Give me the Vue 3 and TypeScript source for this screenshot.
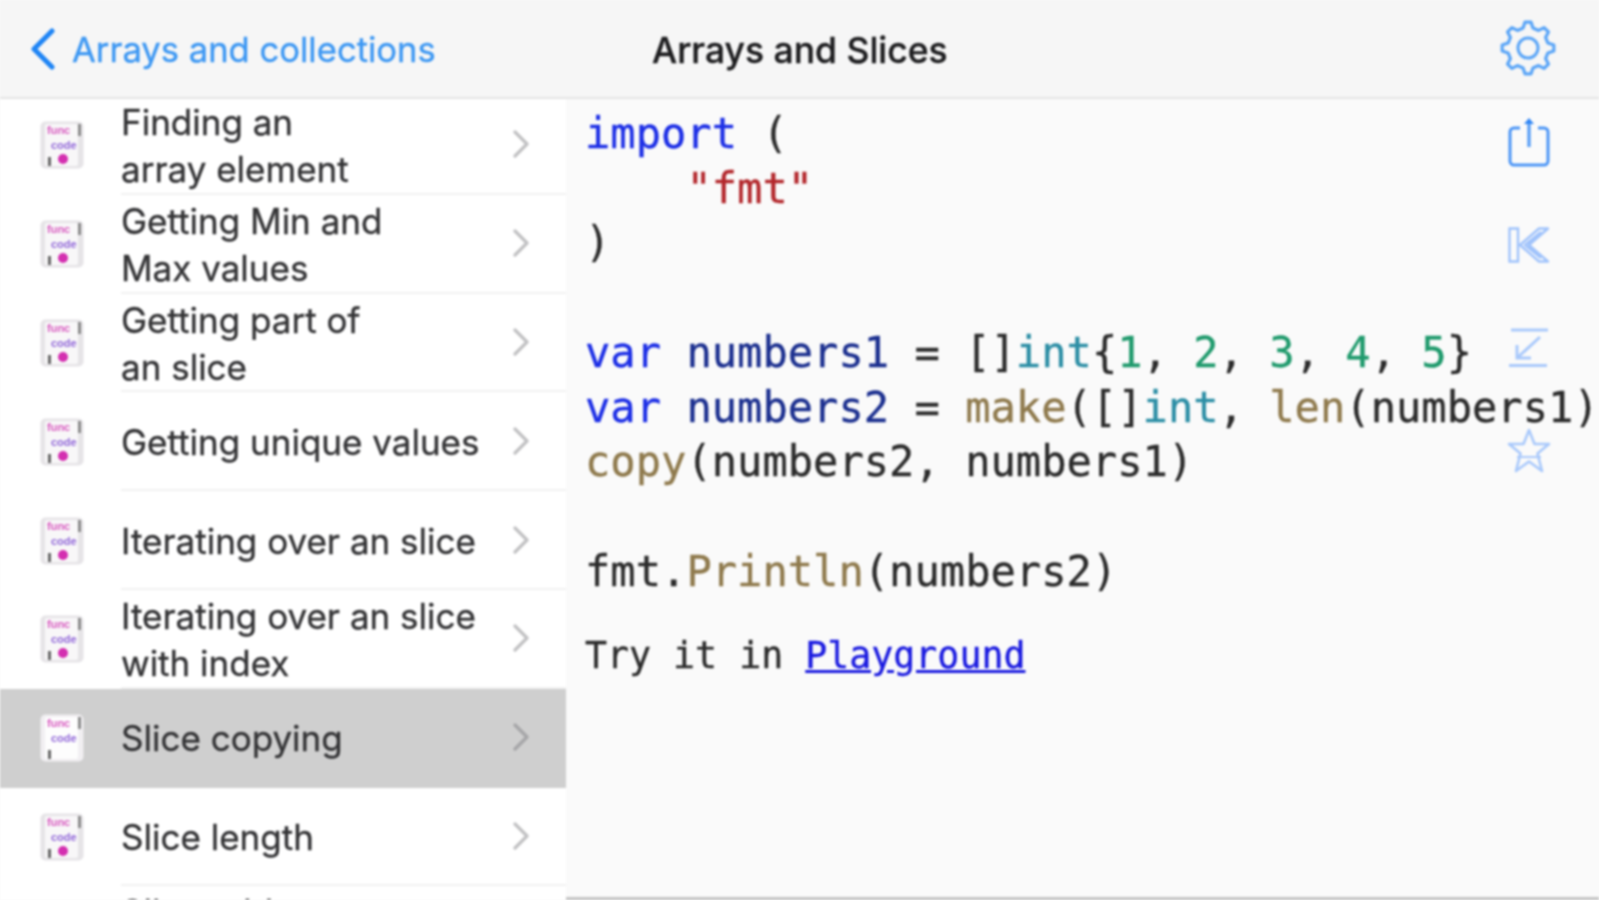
<script setup lang="ts">
interface Row { lines: string[]; selected?: boolean }
const rows: Row[] = [
  { lines: ['Finding an', 'array element'] },
  { lines: ['Getting Min and', 'Max values'] },
  { lines: ['Getting part of', 'an slice'] },
  { lines: ['Getting unique values'] },
  { lines: ['Iterating over an slice'] },
  { lines: ['Iterating over an slice', 'with index'] },
  { lines: ['Slice copying'], selected: true },
  { lines: ['Slice length'] },
  { lines: ['Slice add', 'elements'] },
]

function gearPath(): string {
  const pts: string[] = []
  const teeth = 8
  const c = 28
  for (let i = 0; i < teeth; i++) {
    const a = (i / teeth) * Math.PI * 2 - Math.PI / 2
    const step = Math.PI / teeth
    const spec: [number, number][] = [
      [20.5, a - step * 0.62],
      [26, a - step * 0.3],
      [26, a + step * 0.3],
      [20.5, a + step * 0.62],
    ]
    for (const [r, t] of spec) {
      pts.push(`${(c + r * Math.cos(t)).toFixed(2)} ${(c + r * Math.sin(t)).toFixed(2)}`)
    }
  }
  return 'M' + pts.join(' L') + ' Z'
}
const gear = gearPath()
</script>

<template>
  <div class="screen">
    <header class="nav">
      <div class="back">
        <svg class="chev" width="28" height="42" viewBox="0 0 28 42"><path d="M23 3 L5 21 L23 39" fill="none" stroke="#1f85f5" stroke-width="5" stroke-linecap="round" stroke-linejoin="round"/></svg>
        <span>Arrays and collections</span>
      </div>
      <div class="title">Arrays and Slices</div>
      <svg class="gear" width="56" height="56" viewBox="0 0 56 56">
        <path :d="gear" fill="none" stroke="#5aa5f7" stroke-width="3.2" stroke-linejoin="round"/>
        <circle cx="28" cy="28" r="10" fill="none" stroke="#5aa5f7" stroke-width="3"/>
      </svg>
    </header>
    <div class="body">
      <aside class="list">
        <div v-for="r in rows" :key="r.lines[0]" class="row" :class="{ sel: r.selected }">
          <svg class="doc" width="44" height="48" viewBox="0 0 44 48">
            <rect x="0.5" y="0.5" width="43" height="47" rx="5" :fill="r.selected ? '#f1eff2' : '#e6e4e7'"/>
            <rect x="5" y="3" width="33" height="42" rx="2" :fill="r.selected ? '#fdfdfd' : '#f8f7f8'"/>
            <text x="7" y="13" class="t1">func</text>
            <rect x="38" y="3" width="3" height="12" fill="#8a8a8a"/>
            <text x="11" y="28" class="t2">code</text>
            <rect x="8" y="36" width="3" height="9" fill="#666"/>
            <circle v-if="!r.selected" cx="23" cy="38" r="5" fill="#d42fb0"/>
          </svg>
          <div class="cell">
            <div class="label"><div v-for="l in r.lines" :key="l">{{ l }}</div></div>
            <svg class="arrow" width="18" height="30" viewBox="0 0 18 30"><path d="M3 3 L15 15 L3 27" fill="none" :stroke="r.selected ? '#a6a6a8' : '#c2c2c4'" stroke-width="3.4" stroke-linecap="round" stroke-linejoin="round"/></svg>
          </div>
        </div>
      </aside>
      <main class="code">
<pre class="src"><span class="kw">import</span> (
    <span class="str">"fmt"</span>
)

<span class="kw">var</span> <span class="id">numbers1</span> = []<span class="ty">int</span>{<span class="num">1</span>, <span class="num">2</span>, <span class="num">3</span>, <span class="num">4</span>, <span class="num">5</span>}
<span class="kw">var</span> <span class="id">numbers2</span> = <span class="fn">make</span>([]<span class="ty">int</span>, <span class="fn">len</span>(numbers1))
<span class="fn">copy</span>(numbers2, numbers1)

fmt.<span class="fn">Println</span>(numbers2)</pre>
        <p class="try">Try it in <a href="#">Playground</a></p>
        <div class="tools">
          <svg width="42" height="50" viewBox="0 0 42 50"><path d="M12 11 H6 a4 4 0 0 0 -4 4 V44 a4 4 0 0 0 4 4 H36 a4 4 0 0 0 4 -4 V15 a4 4 0 0 0 -4 -4 H30" fill="none" stroke="#4b95f6" stroke-width="3"/><path d="M21 30 V5" stroke="#5b9ff6" stroke-width="3.4"/><path d="M16 7 L21 1 L26 7 Z" fill="#2f86f5"/></svg>
          <svg width="42" height="36" viewBox="0 0 42 36"><path d="M1.5 1.5 H10 V34.5 H1.5 Z" fill="none" stroke="#a0c3fb" stroke-width="2.4"/><path d="M40 1.5 H31 L12 18 L31 34.5 H40 L21 18 Z M33 5 L17 18 L33 31" fill="none" stroke="#a0c3fb" stroke-width="2.4" stroke-linejoin="round"/></svg>
          <svg width="40" height="40" viewBox="0 0 40 40"><path d="M2 2 H39 M0 37.5 H38" stroke="#a9c9fb" stroke-width="3"/><path d="M31 9 L8 30 M8 17 V30 H22" fill="none" stroke="#a9c9fb" stroke-width="3"/></svg>
          <svg width="44" height="45" viewBox="0 0 44 45"><path d="M22 2 L27.5 16 H42 L30.5 25.5 L35 43 L22 33.5 L9 43 L13.5 25.5 L2 16 H16.5 Z" fill="none" stroke="#a9c9fb" stroke-width="2.6" stroke-linejoin="round"/><path d="M10 29 H34" stroke="#a9c9fb" stroke-width="2"/></svg>
        </div>
      </main>
    </div>
  </div>
</template>

<style scoped>
.screen {
  width: 1599px;
  height: 900px;
  overflow: hidden;
  display: flex;
  flex-direction: column;
  filter: blur(0.9px);
  background: #fafafa;
  font-family: Inter, "Liberation Sans", sans-serif;
  -webkit-text-stroke: 0.35px currentColor;
}
.nav {
  height: 97px;
  flex: none;
  display: flex;
  align-items: center;
  position: relative;
  z-index: 1;
  background: #f6f6f6;
  border-bottom: 2px solid #e4e4e4;
  box-sizing: content-box;
}
.back {
  display: flex;
  align-items: center;
  gap: 15px;
  padding-left: 29px;
  font-size: 34.6px;
  color: #3c97f3;
}
.title {
  position: absolute;
  left: 652px;
  top: 29px;
  font-size: 35.5px;
  font-weight: 500;
  color: #1d1d1f;
}
.gear {
  position: absolute;
  left: 1500px;
  top: 20px;
}
.body {
  flex: 1;
  display: flex;
  min-height: 0;
}
.list {
  width: 566px;
  flex: none;
  background: #fff;
  overflow: hidden;
  margin-top: -3px;
}
.row {
  height: 98.8px;
  display: flex;
  align-items: stretch;
  padding-left: 40px;
  box-sizing: border-box;
}
.row.sel {
  background: #cfcfcf;
}
.doc {
  align-self: center;
  flex: none;
}
.t1, .t2 {
  font-size: 11px;
  font-weight: 700;
  font-family: "Liberation Sans", sans-serif;
  -webkit-text-stroke: 0;
}
.t1 {
  fill: #d85cc0;
}
.t2 {
  fill: #9066d8;
}
.cell {
  flex: 1;
  margin-left: 37px;
  display: flex;
  align-items: center;
  justify-content: space-between;
  padding-right: 36px;
  border-bottom: 2px solid #f1f1f1;
  box-sizing: border-box;
}
.row.sel .cell {
  border-bottom-color: transparent;
}
.label {
  font-size: 35px;
  line-height: 47px;
  color: #333335;
  margin-top: 3px;
}
.code {
  flex: 1;
  position: relative;
  padding: 8px 0 0 19px;
  overflow: hidden;
  border-bottom: 3px solid #c4c4c4;
  min-width: 0;
}
.src {
  margin: 0;
  font-family: "DejaVu Sans Mono", monospace;
  font-size: 42.1px;
  line-height: 54.7px;
  color: #2b2b2b;
  white-space: pre;
}
.kw { color: #1d2fe6; }
.id { color: #1b2f8f; }
.str { color: #b3262b; }
.ty { color: #2c8ea5; }
.num { color: #1f9a6c; }
.fn { color: #8f7a4d; }
.try {
  margin: 35px 0 0;
  font-family: "DejaVu Sans Mono", monospace;
  font-size: 36.6px;
  line-height: 44px;
  color: #2b2b2b;
}
.try a {
  color: #1a1ae0;
  text-decoration: underline;
}
.tools {
  position: absolute;
  left: 940px;
  top: -9px;
  width: 46px;
  display: grid;
  grid-auto-rows: 103px;
  justify-items: center;
  align-items: center;
}
</style>

<style>
html, body { margin: 0; background: #fafafa; }
</style>
